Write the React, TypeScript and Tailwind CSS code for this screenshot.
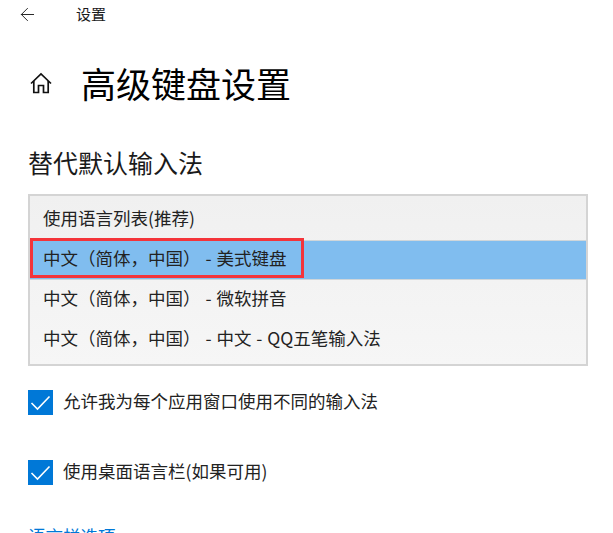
import { ArrowLeft } from "lucide-react";

const languages = [
  "使用语言列表(推荐)",
  "中文（简体，中国） - 美式键盘",
  "中文（简体，中国） - 微软拼音",
  "中文（简体，中国） - 中文 - QQ五笔输入法",
];

const options = ["允许我为每个应用窗口使用不同的输入法", "使用桌面语言栏(如果可用)"];

const CheckBox = () => (
  <span className="flex h-[25px] w-[25px] shrink-0 items-center justify-center bg-[#0078d7]">
    <svg width="25" height="25" viewBox="0 0 25 25" fill="none" stroke="white" strokeWidth="1.6">
      <path d="M3.5 13 L9.5 19 L21.5 6.5" />
    </svg>
  </span>
);

const App = () => {
  return (
    <div className="h-[533px] w-[613px] overflow-hidden bg-white font-['Noto_Sans_CJK_SC',sans-serif] text-[#1a1a1a]">
      {/* TOP BAR */}
      <div className="flex h-[28px] items-center pl-[17px]">
        <ArrowLeft className="h-[21px] w-[21px] text-[#222]" strokeWidth={1.1} />
        <span className="ml-[38px] text-[15px] leading-[28px]">设置</span>
      </div>

      {/* TITLE */}
      <div className="mt-[30px] flex h-[50px] items-center pl-[29px]">
        <svg width="24" height="24" viewBox="0 0 24 24" fill="none" stroke="#111" strokeWidth="1.7">
          <path d="M2 12.5 L12 3 L22 12.5" />
          <path d="M4.8 10 V21.5 H9.5 V14.5 H14.5 V21.5 H19.2 V10" />
        </svg>
        <h1 className="ml-[28px] text-[35px] leading-[50px] font-normal text-black">高级键盘设置</h1>
      </div>

      {/* SECTION */}
      <h2 className="mt-[36px] pl-[28px] text-[25px] leading-[36px] font-normal">替代默认输入法</h2>

      {/* LANGUAGE LIST */}
      <div className="relative mx-[28px] mt-[14px] h-[172px] w-[560px] border-2 border-[#d4d4d4] bg-gradient-to-b from-[#f0f0f0] to-[#f6f6f6] pt-[4px]">
        {languages.map((language, index) => (
          <div
            key={language}
            className={`flex h-[40px] items-center pb-[4px] pl-[13px] text-[17.5px] whitespace-pre text-[#222] [word-spacing:1px] ${
              index === 1 ? "border-y border-[#cfd6da] bg-[#80bdef]" : ""
            }`}
          >
            {language}
          </div>
        ))}
        <div className="absolute top-[42px] left-[0px] h-[40px] w-[274px] border-[3px] border-[#f4343a]" />
      </div>

      {/* OPTIONS */}
      <div className="mt-[23px] flex flex-col gap-[44px] pl-[28px]">
        {options.map((option) => (
          <label key={option} className="flex h-[26px] items-center gap-[10px] text-[17.5px] text-[#222]">
            <CheckBox />
            <span className="mb-[2px]">{option}</span>
          </label>
        ))}
      </div>

      <a className="mt-[38px] block pl-[28px] text-[17.5px] leading-[26px] text-[#0078d7]">语言栏选项</a>
    </div>
  );
};

export default App;
